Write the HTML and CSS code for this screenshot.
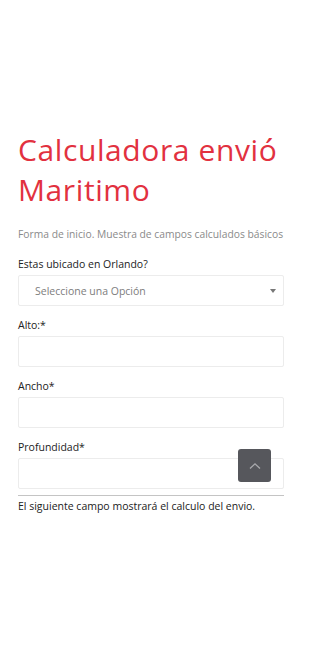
FILE: index.html
```html
<!DOCTYPE html>
<html lang="es">
<head>
<meta charset="utf-8">
<title>Calculadora envió Maritimo</title>
<link rel="stylesheet" href="styles.css">
</head>
<body>
<div class="page">
  <div class="clip">
    <h1 class="title">Calculadora envió Maritimo</h1>
    <p class="intro">Forma de inicio. Muestra de campos calculados básicos</p>
    <form class="form">
      <div class="field">
        <label class="label">Estas ubicado en Orlando?</label>
        <div class="select">
          <span>Seleccione una Opción</span>
          <span class="caret"></span>
        </div>
      </div>
      <div class="field">
        <label class="label">Alto:*</label>
        <div class="input"></div>
      </div>
      <div class="field">
        <label class="label">Ancho*</label>
        <div class="input"></div>
      </div>
      <div class="field">
        <label class="label">Profundidad*</label>
        <div class="input"></div>
      </div>
    </form>
    <hr class="rule">
    <p class="note">El siguiente campo mostrará el calculo del envio.</p>
  </div>
</div>
<a class="totop" href="#">
  <svg width="12" height="8" viewBox="0 0 12 8"><path d="M1 6.5 L6 1.8 L11 6.5" fill="none" stroke="#a9aaad" stroke-width="1.3"/></svg>
</a>
</body>
</html>
```
FILE: styles.css
```css
html, body { margin: 0; padding: 0; background: #fff; }
body { font-family: "Open Sans", "Noto Sans", sans-serif; color: #222; }
.page { width: 300px; padding: 130px 0 0 18px; box-sizing: border-box; }
.clip { width: 266px; }
.title {
  margin: 0;
  font-family: "Open Sans", sans-serif;
  font-weight: 400;
  font-size: 30px;
  line-height: 40px;
  letter-spacing: 0.6px;
  color: #e2313f;
  width: 275px;
}
.intro {
  margin: 17px 0 0;
  font-size: 10.3px;
  line-height: 14px;
  color: #8a8a8a;
  white-space: nowrap;
}
.form { margin-top: 15px; }
.field { margin-bottom: 11px; }
.field:last-child { margin-bottom: 0; }
.label {
  display: block;
  font-size: 10.5px;
  line-height: 15px;
  margin-bottom: 3px;
  padding-top: 1px;
  color: #222;
}
.select, .input {
  box-sizing: border-box;
  height: 31px;
  border: 1px solid #ececec;
  border-radius: 2px;
  background: #fff;
}
.select {
  display: flex;
  align-items: center;
  justify-content: space-between;
  padding: 0 7px 0 16px;
  font-size: 10.5px;
  color: #7d7d7d;
}
.caret {
  width: 0; height: 0;
  border-left: 3.5px solid transparent;
  border-right: 3.5px solid transparent;
  border-top: 4px solid #777;
}
.rule {
  margin: 6px 0 0;
  border: 0;
  border-top: 1px solid #c4c4c4;
}
.note {
  margin: 2px 0 0;
  font-size: 10.5px;
  line-height: 16px;
  color: #222;
  white-space: nowrap;
}
.totop {
  position: absolute;
  left: 238px;
  top: 449px;
  width: 33px;
  height: 33px;
  border-radius: 3px;
  background: #56575c;
  display: flex;
  align-items: center;
  justify-content: center;
}
```
